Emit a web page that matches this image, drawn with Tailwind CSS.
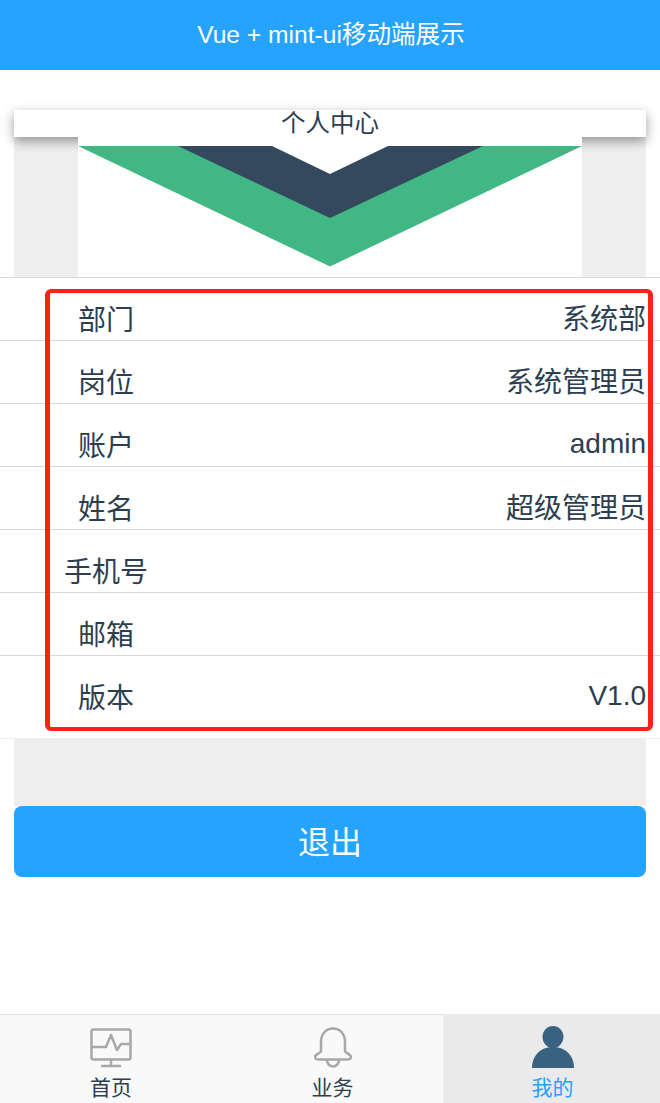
<!DOCTYPE html>
<html lang="zh-CN">
<head>
  <meta charset="UTF-8" />
  <meta name="viewport" content="width=device-width, initial-scale=1" />
  <title>个人中心</title>
  <script src="https://cdn.jsdelivr.net/npm/@tailwindcss/browser@4"></script>
</head>
<body class="bg-white text-[#2c3e50] font-['Liberation_Sans','Noto_Sans_CJK_SC',sans-serif]">
  <div class="relative flex flex-col h-[1103px] w-[660px] overflow-hidden">
    <!-- Header -->
    <header class="h-[70px] shrink-0 bg-[#26a2ff] flex items-center justify-center text-white text-[24.6px] pl-[2px]">Vue + mint-ui移动端展示</header>

    <!-- Card title + logo -->
    <div class="px-[14px] pt-[40px]">
      <div class="relative z-10 h-[27px] bg-white shadow-[0_4px_12px_rgba(0,0,0,0.4)] flex items-center justify-center text-[24.5px] leading-none pt-[1px]">个人中心</div>
      <div class="h-[140px] bg-[#eeeeee] flex justify-center">
        <svg class="relative z-20 block w-[504px] h-[140px] bg-white" viewBox="0 0 504 140">
          <polygon points="0,9 504,9 252,129.5" fill="#41b883" />
          <polygon points="100,9 405,9 252,81" fill="#35495e" />
          <polygon points="194,9 310,9 252,37" fill="#ffffff" />
        </svg>
      </div>
    </div>

    <!-- Info rows -->
    <div class="text-[28px] leading-none">
      <div class="flex items-center justify-between h-[63px] border-t border-[#d9d9d9] pt-[21px] pr-[14px]"><span class="w-[212px] text-center pt-[3px]">部门</span><span>系统部</span></div>
      <div class="flex items-center justify-between h-[63px] border-t border-[#d9d9d9] pt-[21px] pr-[14px]"><span class="w-[212px] text-center pt-[3px]">岗位</span><span>系统管理员</span></div>
      <div class="flex items-center justify-between h-[63px] border-t border-[#d9d9d9] pt-[21px] pr-[14px]"><span class="w-[212px] text-center pt-[3px]">账户</span><span class="pb-[3px]">admin</span></div>
      <div class="flex items-center justify-between h-[63px] border-t border-[#d9d9d9] pt-[21px] pr-[14px]"><span class="w-[212px] text-center pt-[3px]">姓名</span><span>超级管理员</span></div>
      <div class="flex items-center justify-between h-[63px] border-t border-[#d9d9d9] pt-[21px] pr-[14px]"><span class="w-[212px] text-center pt-[3px]">手机号</span><span></span></div>
      <div class="flex items-center justify-between h-[63px] border-t border-[#d9d9d9] pt-[21px] pr-[14px]"><span class="w-[212px] text-center pt-[3px]">邮箱</span><span></span></div>
      <div class="flex items-center justify-between h-[84px] border-t border-b border-t-[#d9d9d9] border-b-[#eeeeee] pt-[21px] pb-[20px] pr-[14px]"><span class="w-[212px] text-center pt-[3px]">版本</span><span class="pb-[3px]">V1.0</span></div>
    </div>

    <!-- Logout -->
    <div class="px-[14px]">
      <div class="h-[67px] bg-[#eeeeee]"></div>
      <button class="block w-full h-[71px] rounded-[8px] bg-[#26a2ff] text-white text-[32px] pt-[3px]">退出</button>
    </div>

    <!-- Tab bar -->
    <nav class="mt-auto h-[89px] flex bg-[#f9f9f9] border-t border-[#dddddd] text-[21px] leading-none">
      <a class="w-[222px] flex flex-col items-center pt-[13px]">
        <svg class="w-[42px] h-[40px]" viewBox="0 0 42 40" fill="none" stroke="#a8a8a8" stroke-width="2.5" stroke-linejoin="round" stroke-linecap="round">
          <rect x="1.500" y="1.500" width="39" height="30" rx="2" />
          <path d="M2 19h14l5-12 6 15 4-6h9" />
          <path d="M21 32v6M12 38h18" />
        </svg>
        <span class="mt-[9px]">首页</span>
      </a>
      <a class="w-[221px] flex flex-col items-center pt-[12px]">
        <svg class="w-[38px] h-[41px]" viewBox="0 0 38 41" fill="none" stroke="#a8a8a8" stroke-width="2.5" stroke-linejoin="round" stroke-linecap="round">
          <path d="M7 24V15C7 7 12 1.500 19 1.500S31 7 31 15V24C31 26 37 27 37 30C37 32 35.500 32.500 34 32.500H4C2.500 32.500 1 32 1 30C1 27 7 26 7 24Z" />
          <path d="M13 33C13 37 16 39.500 19 39.500S25 37 25 33" />
        </svg>
        <span class="mt-[9px]">业务</span>
      </a>
      <a class="flex-1 -mt-[1px] pl-[2px] bg-[#eaeaea] text-[#26a2ff] flex flex-col items-center pt-[12px]">
        <svg class="w-[42px] h-[42px]" viewBox="0 0 42 42" fill="#38627f">
          <ellipse cx="21" cy="11" rx="10.500" ry="11" />
          <path d="M0 42C0 31 7 21 21 21S42 31 42 42Z" />
        </svg>
        <span class="mt-[9px]">我的</span>
      </a>
    </nav>

    <!-- Red highlight box over the rows -->
    <div class="absolute left-[45px] top-[289px] w-[608px] h-[442px] border-x-[5px] border-y-[4.5px] border-[#ff2016] rounded-[6px] pointer-events-none z-30"></div>
  </div>
</body>
</html>
